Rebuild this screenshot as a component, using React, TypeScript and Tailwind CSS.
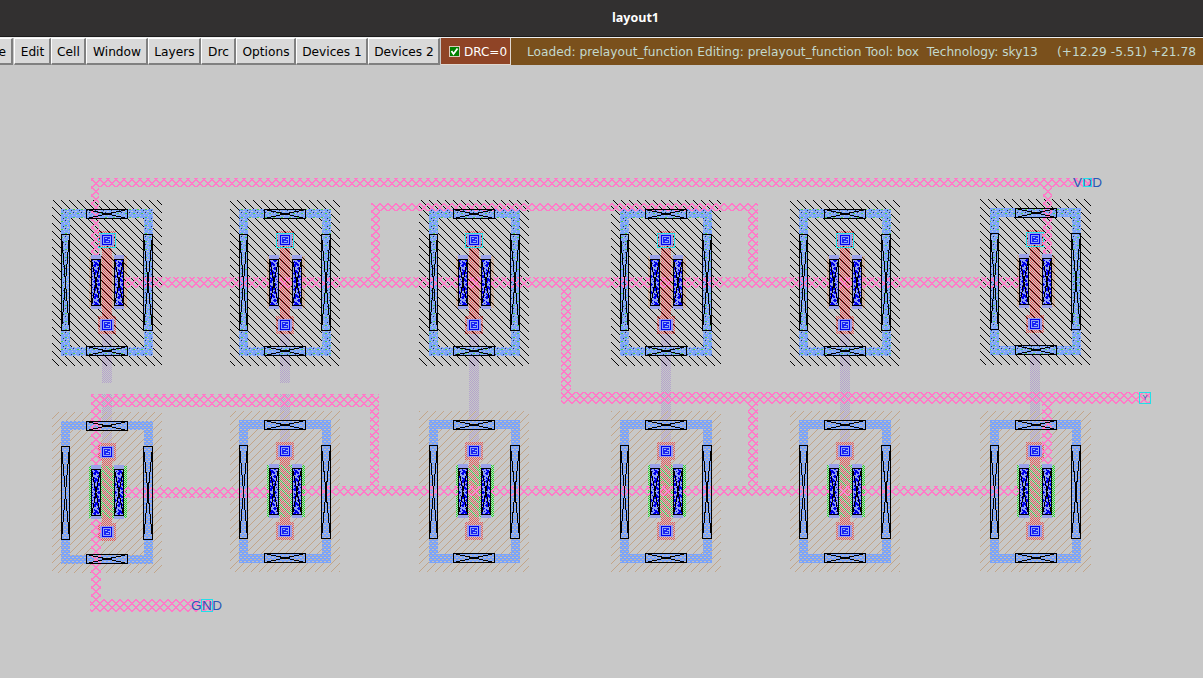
import React from "react";

type Box = [x: number, y: number, w: number, h: number];

const menus: [string, string][] = [
  ["Edit", "w-[37px]"],
  ["Cell", "w-[35px]"],
  ["Window", "w-[62px]"],
  ["Layers", "w-[53px]"],
  ["Drc", "w-[35px]"],
  ["Options", "w-[60px]"],
  ["Devices 1", "w-[72px]"],
  ["Devices 2", "w-[72px]"],
];

const metalRails: Box[] = [
  [91, 178, 1002, 9],
  [91, 187, 8, 119],
  [1043, 187, 9, 75],
  [371, 203, 387, 8],
  [371, 211, 9, 66],
  [748, 211, 10, 66],
  [114, 277, 915, 11],
  [561, 288, 10, 105],
  [561, 392, 590, 12],
  [748, 404, 10, 82],
  [1042, 404, 10, 66],
  [91, 394, 288, 13],
  [370, 407, 9, 79],
  [91, 407, 10, 192],
  [90, 599, 124, 13],
  [115, 487, 160, 11],
  [290, 486, 739, 10],
];

const columns = [107, 285, 474, 666, 845, 1035];

function Bits({ rows, fill }: { rows: string[]; fill: string }) {
  const d = rows
    .map((row, y) => row.split("").map((c, x) => (c === "#" ? `M${x} ${y}h1v1h-1z` : "")).join(""))
    .join("");
  return <path d={d} fill={fill} />;
}

function Tile({ id, size, children }: { id: string; size: number; children: React.ReactNode }) {
  return (
    <pattern id={id} width={size} height={size} patternUnits="userSpaceOnUse">
      {children}
    </pattern>
  );
}

function R({ b, fill }: { b: Box; fill: string }) {
  return <rect x={b[0]} y={b[1]} width={b[2]} height={b[3]} fill={fill} />;
}

function Crossed({ b }: { b: Box }) {
  const [x, y, w, h] = b;
  return (
    <g stroke="#000" fill="none">
      <rect x={x + 0.5} y={y + 0.5} width={w - 1} height={h - 1} />
      <path d={`M${x + 0.5} ${y + 0.5}L${x + w - 0.5} ${y + h - 0.5}M${x + w - 0.5} ${y + 0.5}L${x + 0.5} ${y + h - 0.5}`} />
    </g>
  );
}

function GateContact({ cx, y, labelled }: { cx: number; y: number; labelled?: boolean }) {
  return (
    <g>
      <R b={labelled ? [cx - 9, y, 18, 17] : [cx - 9, y, 18, 18]} fill="url(#poly)" />
      <R b={[cx - 7, y + 3, 14, 12]} fill="#969cec" />
      {labelled && <rect x={cx - 8.5} y={y + 2.5} width={17} height={14} fill="none" stroke="#22dfe8" />}
      <R b={[cx - 5, y + 4, 10, 10]} fill="#0000f0" />
      <R b={[cx - 4, y + 5, 8, 8]} fill="#8fa2f2" />
      <R b={[cx - 3, y + 6, 6, 6]} fill="#1a24f4" />
      <R b={[cx - 2, y + 7, 2, 1]} fill="#9ab0ff" />
      <R b={[cx + 1, y + 8, 2, 1]} fill="#9ab0ff" />
      <R b={[cx - 1, y + 10, 3, 1]} fill="#9ab0ff" />
    </g>
  );
}

function geometry(cx: number, dy: number, kind: "p" | "n") {
  const p = kind === "p";
  const left = cx === 474 || cx === 1035 ? cx - 45 : cx - 46;
  const boxX = cx === 1035 ? cx - 20 : cx - 21;
  const top = (p ? 209 : 420) + dy;
  const bottom = (p ? 356 : 563) + dy;
  const side = (p ? 234 : 445) + dy;
  const sideH = p ? 97 : 94;
  const cTop = (p ? 259 : 468) + dy;
  const taps: Box[] = [
    [boxX, top, 42, 10],
    [boxX, bottom - 10, 42, 10],
    [left, side, 9, sideH],
    [cx + 36, side, 10, sideH],
  ];
  return { p, left, top, bottom, cTop, taps };
}

function Device({ cx, dy, kind }: { cx: number; dy: number; kind: "p" | "n" }) {
  const { p, left, top, bottom, cTop } = geometry(cx, dy, kind);
  const gateTop = (p ? 231 : 442) + dy;
  const gateBottom = (p ? 316 : 522) + dy;
  return (
    <g>
      <path
        fill={p ? "url(#ntap)" : "url(#ptap)"}
        fillRule="evenodd"
        d={`M${left} ${top}H${cx + 46}V${bottom}H${left}zM${left + 9} ${top + 9}V${bottom - 9}H${cx + 37}V${top + 9}z`}
      />
      <R b={[cx - 18, cTop - 3, 38, 52]} fill={p ? "url(#pdiff)" : "url(#ndiff)"} />
      <R b={[cx - 5, gateTop + 14, 10, gateBottom - gateTop - 10]} fill="url(#poly)" />
      {!p && <R b={[cx - 6, cTop - 3, 13, 52]} fill="url(#gate)" />}
      <GateContact cx={cx} y={gateTop} labelled={p} />
      <GateContact cx={cx} y={gateBottom} />
    </g>
  );
}

function DeviceContacts({ cx, dy, kind }: { cx: number; dy: number; kind: "p" | "n" }) {
  const { cTop, taps } = geometry(cx, dy, kind);
  return (
    <g>
      {taps.map((b, i) => (
        <Crossed key={i} b={b} />
      ))}
      {[cx - 16, cx + 7].map((x) => (
        <g key={x}>
          <R b={[x, cTop - 4, 10, 54]} fill="#9aa2ea" />
          <R b={[x, cTop, 10, 47]} fill="url(#licon)" />
          <Crossed b={[x, cTop, 10, 47]} />
        </g>
      ))}
    </g>
  );
}

const pShift = (i: number) => (i === 5 ? -1 : 0);
const nShift = (i: number) => (i === 0 ? 1 : 0);

function LayoutCanvas() {
  return (
    <svg width="1203" height="613" viewBox="0 65 1203 613" shapeRendering="crispEdges" className="block">
      <defs>
        <Tile id="metal" size={8}>
          <Bits
            fill="#ff7ac8"
            rows={["##....##", ".##..##.", "..####..", "...##...", "..####..", ".##..##.", "##....##", "#......#"]}
          />
        </Tile>
        <Tile id="nwell" size={8}>
          <Bits
            fill="#000"
            rows={[".....#..", "......#.", ".......#", "#.......", ".#......", "..#.....", "...#....", "....#..."]}
          />
        </Tile>
        <Tile id="pwell" size={8}>
          <Bits
            fill="#c3a588"
            rows={["......#.", ".....#..", "....#...", "...#....", "..#.....", ".#......", "#.......", ".......#"]}
          />
        </Tile>
        <Tile id="ntap" size={8}>
          <rect width="8" height="8" fill="#7ba4fa" />
          <Bits fill="#48cc50" rows={["", ".##.....", "", "", "", ".....##.", "", ""]} />
          <Bits fill="#c8c8c8" rows={["", "...#....", "", "#..##...", "", "..#....#", "", "#...#..."]} />
          <Bits fill="#203050" rows={["", "", ".......#", "", ".#......", "", "", ""]} />
        </Tile>
        <Tile id="ptap" size={8}>
          <rect width="8" height="8" fill="#7ba4fa" />
          <Bits fill="#c8c0b8" rows={["", "##..##..", "", "", "", "##..##..", "", ""]} />
          <Bits fill="#c4b4a4" rows={["", "", "", "..##..##", "", "", "", "..##..##"]} />
        </Tile>
        <Tile id="poly" size={2}>
          <Bits fill="#e65858" rows={["#.", ".#"]} />
        </Tile>
        <Tile id="gate" size={8}>
          <Bits
            fill="#48c848"
            rows={["#.......", ".#......", "..#.....", "...#....", "....#...", ".....#..", "......#.", ".......#"]}
          />
          <Bits fill="#a89468" rows={["..#...#.", "", "#...#...", "", "..#...#.", "", "#...#...", ""]} />
        </Tile>
        <Tile id="pdiff" size={2}>
          <Bits fill="#d0a080" rows={["#.", ".#"]} />
        </Tile>
        <Tile id="ndiff" size={2}>
          <Bits fill="#20dc28" rows={["#.", ".#"]} />
        </Tile>
        <Tile id="local" size={2}>
          <Bits fill="#b4a4cc" rows={["#.", ".#"]} />
        </Tile>
        <Tile id="licon" size={8}>
          <rect width="8" height="8" fill="#8fa0f4" />
          <Bits
            fill="#0000e8"
            rows={["###...##", ".##..###", "......##", "..##....", ".####...", "..##..#.", "#.....##", "##..#..#"]}
          />
        </Tile>
      </defs>

      {columns.map((cx, i) => (
        <g key={cx}>
          <R b={[cx - 5, 334, 10, i < 2 ? 49 : 108]} fill="url(#local)" />
          {i < 2 && <R b={[cx - 5, 394, 10, 50]} fill="url(#local)" />}
          <R b={[cx - 55, 200 + pShift(i), i === 5 ? 111 : 110, 166]} fill="url(#nwell)" />
          <R b={[cx - 55, 411 + nShift(i), i === 5 ? 111 : 110, 161]} fill="url(#pwell)" />
          <Device cx={cx} dy={pShift(i)} kind="p" />
          <Device cx={cx} dy={nShift(i)} kind="n" />
        </g>
      ))}
      {metalRails.map((b, i) => (
        <R key={i} b={b} fill="url(#metal)" />
      ))}
      {columns.map((cx, i) => (
        <g key={cx}>
          <R b={[cx - 5, 248 + pShift(i), 10, 68]} fill="url(#nwell)" />
          <DeviceContacts cx={cx} dy={pShift(i)} kind="p" />
          <DeviceContacts cx={cx} dy={nShift(i)} kind="n" />
        </g>
      ))}

      <g fill="#2858b8" fontFamily="'Liberation Sans', sans-serif">
        <text x="1073" y="187" fontSize="13.5" textLength="29">VDD</text>
        <text x="191" y="610" fontSize="13.5" textLength="31">GND</text>
        <text x="1142.500" y="400" fontSize="7.5">Y</text>
      </g>
      <g fill="none" stroke="#22dfe8">
        <rect x="1083.5" y="178.5" width="8" height="8" />
        <rect x="1139.5" y="392.5" width="11" height="11" />
        <rect x="201.5" y="599.5" width="11" height="12" />
      </g>
    </svg>
  );
}

export default function App() {
  return (
    <div className="flex h-[678px] w-[1203px] flex-col overflow-hidden bg-[#c8c8c8] font-['DejaVu_Sans',sans-serif]">
      <header className="flex h-[37px] shrink-0 items-center justify-center border-b border-[#1c1b1b] bg-[#323030] pt-px pl-[68px] font-['Open_Sans',sans-serif] text-[12.5px] font-bold text-white">
        layout1
      </header>
      <nav className="flex h-7 shrink-0 border-t border-[#efefef] text-[12.2px] whitespace-nowrap text-black">
        <div className="flex w-[13px] items-center justify-end border-t border-r-2 border-b-2 border-t-white border-r-[#808080] border-b-[#808080] bg-[#d9d9d9] pt-0.5 pr-[5px]">
          e
        </div>
        <div className="flex pl-px">
          {menus.map(([label, width]) => (
            <div
              key={label}
              className={`${width} flex shrink-0 items-center justify-center border-t border-r-2 border-b-2 border-l border-t-white border-r-[#808080] border-b-[#808080] border-l-white bg-[#d9d9d9] pt-0.5 pl-px`}
            >
              {label}
            </div>
          ))}
        </div>
        <div className="ml-px flex w-[70px] shrink-0 items-center border-r border-b border-[#e0d8d0] bg-[#8f4426] pt-px pl-2 text-[12px] text-white">
          <svg width="11" height="11" viewBox="0 0 11 11" className="mr-1">
            <rect x=".5" y=".5" width="10" height="10" fill="#008000" stroke="#d9c8b8" />
            <path d="M2.5 5l2 3 4-5.500" fill="none" stroke="#fff" strokeWidth="1.800" />
          </svg>
          DRC=0
        </div>
        <div className="flex grow items-center bg-[#7a501c] pt-px pl-4 whitespace-pre text-[#c3d9cd]">
          <span className="w-[530px]">Loaded: prelayout_function Editing: prelayout_function Tool: box  Technology: sky13</span>
          <span>(+12.29 -5.51) +21.78</span>
        </div>
      </nav>
      <main className="h-[613px]">
        <LayoutCanvas />
      </main>
    </div>
  );
}
